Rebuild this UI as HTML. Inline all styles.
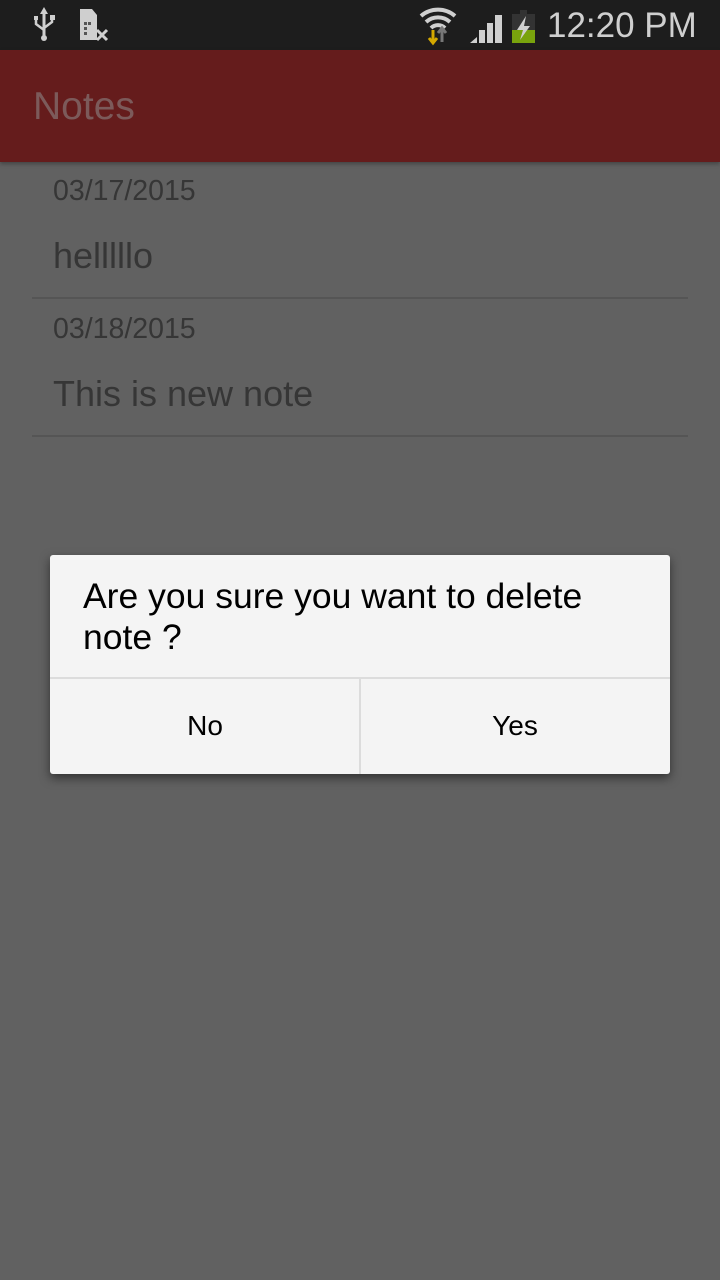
<!DOCTYPE html>
<html><head><meta charset="utf-8"><style>
*{margin:0;padding:0;box-sizing:border-box}
body{width:720px;height:1280px;background:#616161;font-family:"Liberation Sans",sans-serif;position:relative;overflow:hidden}
.sb{position:absolute;top:0;left:0;width:720px;height:50px;background:#1d1d1d}
.ab{position:absolute;top:50px;left:0;width:720px;height:112px;background:#651c1c;box-shadow:0 2px 4px rgba(0,0,0,.3)}
.ab span{position:absolute;left:33px;top:35px;font-size:39px;color:#7c5a5a}
.d{position:absolute;left:53px;font-size:28.5px;color:#363636}
.n{position:absolute;left:53px;font-size:36px;color:#363636}
.hr{position:absolute;left:32px;width:656px;height:2px;background:#555}
.dlg{position:absolute;left:50px;top:555px;width:620px;height:219px;background:#f4f4f4;border-radius:3px;box-shadow:0 4px 10px rgba(0,0,0,.5)}
.q{position:absolute;left:33px;top:21px;font-size:35.5px;line-height:41px;color:#000}
.hl{position:absolute;left:0;top:122px;width:620px;height:2px;background:#dcdcdc}
.vl{position:absolute;left:309px;top:124px;width:2px;height:95px;background:#dcdcdc}
.b{position:absolute;top:155px;font-size:28px;color:#000;width:310px;text-align:center}
</style></head><body>
<div class="sb">
<svg width="720" height="50" style="position:absolute;left:0;top:0">
<g fill="#cfcfcf" stroke="#cfcfcf">
<line x1="44" y1="10" x2="44" y2="38" stroke-width="3"/>
<polygon points="44,7 40,14 48,14" stroke="none"/>
<path d="M36 18v6l8 6M52 18v4l-8 6" fill="none" stroke-width="2.5"/>
<circle cx="44" cy="38" r="3" stroke="none"/>
<rect x="34" y="16" width="4" height="4" stroke="none"/><rect x="50" y="15" width="5" height="5" stroke="none"/>
<path d="M80 9h12l5 6v25h-17z" stroke="none"/>
</g>
<path d="M97 30l10 10M107 30l-10 10" stroke="#cfcfcf" stroke-width="3"/>
<g fill="#555"><rect x="84" y="22" width="3" height="3"/><rect x="88" y="22" width="3" height="3"/><rect x="84" y="27" width="3" height="3"/><rect x="84" y="32" width="3" height="3"/></g>
<path d="M421 16a26 26 0 0 1 34 0M426 22a18 18 0 0 1 24 0M431 28a10 10 0 0 1 14 0" stroke="#cfcfcf" stroke-width="4" fill="none"/>
<path d="M433 30v12M429 38l4 5 4-5" stroke="#d4a800" stroke-width="3" fill="none"/>
<path d="M442 42v-12M438 33l4-5 4 5" stroke="#777" stroke-width="3" fill="none"/>
<g fill="#cfcfcf"><polygon points="470,43 477,37 477,43"/><rect x="479" y="30" width="6" height="13"/><rect x="487" y="23" width="6" height="20"/><rect x="495" y="15" width="7" height="28"/></g>
<rect x="512" y="14" width="23" height="29" fill="#333"/><rect x="520" y="10" width="7" height="4" fill="#333"/>
<rect x="512" y="30" width="23" height="13" fill="#79a30d"/>
<polygon points="526,16 517,30 523,30 520,40 530,26 524,26" fill="#cfcfcf"/>
</svg>
<svg width="720" height="50" style="position:absolute;left:0;top:0"><text x="547" y="37" font-family="Liberation Sans" font-size="35" fill="#cfcfcf">12:20 PM</text></svg>
</div>
<div class="ab"><span>Notes</span></div>
<div class="d" style="top:175px">03/17/2015</div>
<div class="n" style="top:235px">helllllo</div>
<div class="hr" style="top:297px"></div>
<div class="d" style="top:313px">03/18/2015</div>
<div class="n" style="top:373px">This is new note</div>
<div class="hr" style="top:435px"></div>
<div class="dlg">
<div class="q">Are you sure you want to delete<br>note ?</div>
<div class="hl"></div><div class="vl"></div>
<div class="b" style="left:0">No</div>
<div class="b" style="left:310px">Yes</div>
</div>
</body></html>
